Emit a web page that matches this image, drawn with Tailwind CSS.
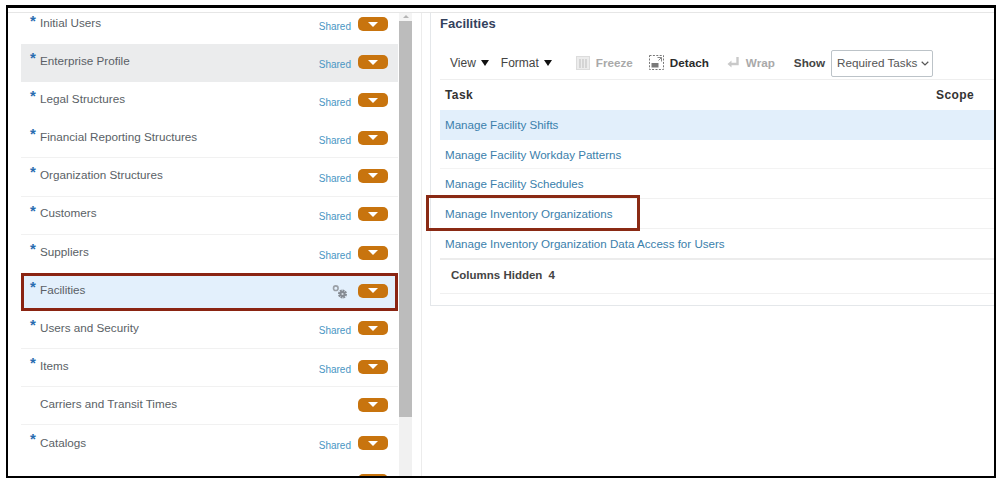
<!DOCTYPE html>
<html>
<head>
<meta charset="utf-8">
<script src="https://cdn.jsdelivr.net/npm/@tailwindcss/browser@4"></script>
</head>
<body class="bg-white font-['Liberation_Sans',Arial,sans-serif]">
<div class="w-[1003px] h-[481px] pt-[5px] pl-[6px] overflow-hidden">
  <div class="w-[990px] h-[473px] border-2 border-t-[3px] border-black overflow-hidden flex flex-col">
    <div class="h-[5px] shrink-0 border-b border-[#e6e6e6]"></div>
    <div class="flex flex-1 min-h-0">
      <!-- left list -->
      <div class="w-[377px] ml-[13px] shrink-0 flex flex-col overflow-hidden text-[11.7px] text-[#5a5f66]">
        <div class="h-[31px] shrink-0 pb-[7px] flex items-center pl-[9px] pr-[10px]"><span class="w-[10px] self-start mt-[-3px] text-[15px] font-bold text-[#2a6db0]">*</span><span class="flex-1 mb-[4px]">Initial Users</span><span class="text-[10px] text-[#4a96c4] mr-[7px] mt-[3px]">Shared</span><span class="w-[30px] h-[14px] mb-[2px] rounded-[5px] bg-[#c8740e] flex items-center justify-center"><span class="w-0 h-0 border-x-[5px] border-x-transparent border-t-[5px] border-t-white"></span></span></div>

        <div class="h-[38.13px] shrink-0 bg-[#ebeced] flex items-center pl-[9px] pr-[10px]"><span class="w-[10px] self-start mt-[3px] text-[15px] font-bold text-[#2a6db0]">*</span><span class="flex-1 mb-[4px]">Enterprise Profile</span><span class="text-[10px] text-[#4a96c4] mr-[7px] mt-[3px]">Shared</span><span class="w-[30px] h-[14px] mb-[2px] rounded-[5px] bg-[#c8740e] flex items-center justify-center"><span class="w-0 h-0 border-x-[5px] border-x-transparent border-t-[5px] border-t-white"></span></span></div>

        <div class="h-[38.13px] shrink-0 flex items-center pl-[9px] pr-[10px]"><span class="w-[10px] self-start mt-[3px] text-[15px] font-bold text-[#2a6db0]">*</span><span class="flex-1 mb-[4px]">Legal Structures</span><span class="text-[10px] text-[#4a96c4] mr-[7px] mt-[3px]">Shared</span><span class="w-[30px] h-[14px] mb-[2px] rounded-[5px] bg-[#c8740e] flex items-center justify-center"><span class="w-0 h-0 border-x-[5px] border-x-transparent border-t-[5px] border-t-white"></span></span></div>

        <div class="h-[38.13px] shrink-0 border-b border-[#f1f1f1] flex items-center pl-[9px] pr-[10px]"><span class="w-[10px] self-start mt-[3px] text-[15px] font-bold text-[#2a6db0]">*</span><span class="flex-1 mb-[4px]">Financial Reporting Structures</span><span class="text-[10px] text-[#4a96c4] mr-[7px] mt-[3px]">Shared</span><span class="w-[30px] h-[14px] mb-[2px] rounded-[5px] bg-[#c8740e] flex items-center justify-center"><span class="w-0 h-0 border-x-[5px] border-x-transparent border-t-[5px] border-t-white"></span></span></div>

        <div class="h-[38.13px] shrink-0 border-b border-[#f1f1f1] flex items-center pl-[9px] pr-[10px]"><span class="w-[10px] self-start mt-[3px] text-[15px] font-bold text-[#2a6db0]">*</span><span class="flex-1 mb-[4px]">Organization Structures</span><span class="text-[10px] text-[#4a96c4] mr-[7px] mt-[3px]">Shared</span><span class="w-[30px] h-[14px] mb-[2px] rounded-[5px] bg-[#c8740e] flex items-center justify-center"><span class="w-0 h-0 border-x-[5px] border-x-transparent border-t-[5px] border-t-white"></span></span></div>

        <div class="h-[38.13px] shrink-0 border-b border-[#f1f1f1] flex items-center pl-[9px] pr-[10px]"><span class="w-[10px] self-start mt-[3px] text-[15px] font-bold text-[#2a6db0]">*</span><span class="flex-1 mb-[4px]">Customers</span><span class="text-[10px] text-[#4a96c4] mr-[7px] mt-[3px]">Shared</span><span class="w-[30px] h-[14px] mb-[2px] rounded-[5px] bg-[#c8740e] flex items-center justify-center"><span class="w-0 h-0 border-x-[5px] border-x-transparent border-t-[5px] border-t-white"></span></span></div>

        <div class="h-[38.13px] shrink-0 flex items-center pl-[9px] pr-[10px]"><span class="w-[10px] self-start mt-[3px] text-[15px] font-bold text-[#2a6db0]">*</span><span class="flex-1 mb-[4px]">Suppliers</span><span class="text-[10px] text-[#4a96c4] mr-[7px] mt-[3px]">Shared</span><span class="w-[30px] h-[14px] mb-[2px] rounded-[5px] bg-[#c8740e] flex items-center justify-center"><span class="w-0 h-0 border-x-[5px] border-x-transparent border-t-[5px] border-t-white"></span></span></div>

        <div class="relative h-[38.13px] shrink-0 bg-[#e3f0fc] flex items-center pl-[9px] pr-[10px]"><span class="w-[10px] self-start mt-[3px] text-[15px] font-bold text-[#2a6db0]">*</span><span class="flex-1 mb-[4px]">Facilities</span>
          <svg class="mr-[10px] w-[16px] h-[16px]" viewBox="0 0 16 16" fill="none"><circle cx="3.8" cy="4.2" r="2.3" stroke="#9aa0a7" stroke-width="1.6"/><circle cx="10.5" cy="10" r="3.4" stroke="#858b93" stroke-width="2.2" stroke-dasharray="1.9 0.7"/><circle cx="10.5" cy="10" r="3" fill="#858b93"/><circle cx="10.5" cy="10" r="1.1" fill="#d5dde5"/></svg>
          <span class="w-[30px] h-[14px] mb-[2px] rounded-[5px] bg-[#c8740e] flex items-center justify-center"><span class="w-0 h-0 border-x-[5px] border-x-transparent border-t-[5px] border-t-white"></span></span>
          <div class="absolute inset-0 border-[3px] border-[#8a2412]"></div>
        </div>

        <div class="h-[38.13px] shrink-0 border-b border-[#f1f1f1] flex items-center pl-[9px] pr-[10px]"><span class="w-[10px] self-start mt-[3px] text-[15px] font-bold text-[#2a6db0]">*</span><span class="flex-1 mb-[4px]">Users and Security</span><span class="text-[10px] text-[#4a96c4] mr-[7px] mt-[3px]">Shared</span><span class="w-[30px] h-[14px] mb-[2px] rounded-[5px] bg-[#c8740e] flex items-center justify-center"><span class="w-0 h-0 border-x-[5px] border-x-transparent border-t-[5px] border-t-white"></span></span></div>

        <div class="h-[38.13px] shrink-0 border-b border-[#f1f1f1] flex items-center pl-[9px] pr-[10px]"><span class="w-[10px] self-start mt-[3px] text-[15px] font-bold text-[#2a6db0]">*</span><span class="flex-1 mb-[4px]">Items</span><span class="text-[10px] text-[#4a96c4] mr-[7px] mt-[3px]">Shared</span><span class="w-[30px] h-[14px] mb-[2px] rounded-[5px] bg-[#c8740e] flex items-center justify-center"><span class="w-0 h-0 border-x-[5px] border-x-transparent border-t-[5px] border-t-white"></span></span></div>

        <div class="h-[38.13px] shrink-0 border-b border-[#f1f1f1] flex items-center pl-[19px] pr-[10px]"><span class="flex-1 mb-[4px]">Carriers and Transit Times</span><span class="w-[30px] h-[14px] mb-[2px] rounded-[5px] bg-[#c8740e] flex items-center justify-center"><span class="w-0 h-0 border-x-[5px] border-x-transparent border-t-[5px] border-t-white"></span></span></div>

        <div class="h-[38.13px] shrink-0 flex items-center pl-[9px] pr-[10px]"><span class="w-[10px] self-start mt-[3px] text-[15px] font-bold text-[#2a6db0]">*</span><span class="flex-1 mb-[4px]">Catalogs</span><span class="text-[10px] text-[#4a96c4] mr-[7px] mt-[3px]">Shared</span><span class="w-[30px] h-[14px] mb-[2px] rounded-[5px] bg-[#c8740e] flex items-center justify-center"><span class="w-0 h-0 border-x-[5px] border-x-transparent border-t-[5px] border-t-white"></span></span></div>

        <div class="h-[38.13px] shrink-0 flex items-center justify-end pr-[10px]"><span class="w-[30px] h-[14px] mb-[2px] rounded-[5px] bg-[#c8740e]"></span></div>
      </div>
      <!-- scrollbar -->
      <div class="w-[13px] ml-[1px] shrink-0 flex flex-col bg-[#f1f1f1]">
        <div class="h-[8px] flex justify-center pt-[1px] bg-[#f4f4f4]"><span class="w-0 h-0 mt-[1px] border-x-[3px] border-x-transparent border-b-[3px] border-b-[#b5b5b5]"></span></div>
        <div class="h-[396px] bg-[#bcbcbc]"></div>
      </div>
      <!-- divider -->
      <div class="w-[10px] shrink-0 border-r border-[#ececec]"></div>
      <!-- right pane -->
      <div class="flex-1 min-w-0 ml-[8px] self-start h-[293px] border-l border-b border-[#e4e7ea] pl-[9px] text-[11.6px]">
        <div class="h-[22px] flex items-center text-[13px] font-bold text-[#33415c]">Facilities</div>
        <div class="mt-[10px] h-[35px] pt-[1px] border-b border-[#eeeeee] flex items-center pl-[10px] text-[12px] text-[#444]">
          <span>View</span>
          <span class="ml-[5px] w-0 h-0 border-x-[4.5px] border-x-transparent border-t-[6px] border-t-[#111]"></span>
          <span class="ml-[12px]">Format</span>
          <span class="ml-[5px] w-0 h-0 border-x-[4.5px] border-x-transparent border-t-[6px] border-t-[#111]"></span>
          <svg class="ml-[24px] w-[14px] h-[14px]" viewBox="0 0 14 14"><rect x="0.5" y="0.5" width="13" height="13" fill="#ececec" stroke="#dcdcdc"/><path d="M4 3v9M7 3v9M10 3v9" stroke="#bdbdbd" stroke-width="1"/></svg>
          <span class="ml-[6px] font-bold text-[11.7px] text-[#a9a9a9]">Freeze</span>
          <svg class="ml-[16px] w-[15px] h-[15px]" viewBox="0 0 15 15" fill="none"><rect x="0.5" y="0.5" width="14" height="14" stroke="#777" stroke-dasharray="2 1.4"/><rect x="2.5" y="8" width="7" height="4.5" fill="#7a7a7a"/><path d="M8.5 2.5h4v4M12.5 2.5l-3 3" stroke="#888" stroke-width="1"/></svg>
          <span class="ml-[6px] font-bold text-[11.7px] text-[#2b2b2b]">Detach</span>
          <svg class="ml-[18px] w-[13px] h-[13px]" viewBox="0 0 13 13" fill="none"><path d="M10.5 1v7H3" stroke="#c9c9c9" stroke-width="2.4"/><path d="M0.5 8l4-3.5v7z" fill="#c9c9c9"/></svg>
          <span class="ml-[6px] font-bold text-[11.7px] text-[#a9a9a9]">Wrap</span>
          <span class="ml-[19px] font-bold text-[11.7px] text-[#444]">Show</span>
          <div class="ml-[6px] w-[102px] h-[27px] mt-[1px] border border-[#bcc3c8] rounded-[2px] flex items-center pl-[5px] text-[11.7px] text-[#555]">
            <span>Required Tasks</span>
            <svg class="ml-[4px] w-[8px] h-[5px]" viewBox="0 0 8 5" fill="none"><path d="M0.7 0.8L4 4L7.3 0.8" stroke="#555" stroke-width="1.2"/></svg>
          </div>
        </div>
        <div class="h-[30px] flex items-center justify-between pl-[5px] pr-[20px] text-[12px] font-bold text-[#333] tracking-[0.4px]"><span>Task</span><span>Scope</span></div>
        <div class="h-[29.7px] bg-[#e2effb] flex items-center pl-[5px] text-[#3a80ab]">Manage Facility Shifts</div>
        <div class="h-[29.7px] pt-[1px] border-b border-[#f3f3f3] flex items-center pl-[5px] text-[#3a80ab]">Manage Facility Workday Patterns</div>
        <div class="h-[29.7px] border-b border-[#f1f1f1] flex items-center pl-[5px] text-[#3a80ab]">Manage Facility Schedules</div>
        <div class="relative h-[29.7px] pt-[1px] border-b border-[#f1f1f1] flex items-center pl-[5px] text-[#3a80ab]">Manage Inventory Organizations
          <div class="absolute left-[-14px] top-[-4px] w-[214px] h-[36px] border-[3px] border-[#8a2a14]"></div>
        </div>
        <div class="h-[29.7px] flex items-center pl-[5px] text-[#3a80ab]">Manage Inventory Organization Data Access for Users</div>
        <div class="h-[36px] border-t-2 border-b border-t-[#ececec] border-b-[#f0f0f0] pb-[3px] flex items-center pl-[11px] text-[11.5px] font-bold text-[#444]"><span>Columns Hidden</span><span class="ml-[6px]">4</span></div>
      </div>
    </div>
  </div>
</div>
</body>
</html>
